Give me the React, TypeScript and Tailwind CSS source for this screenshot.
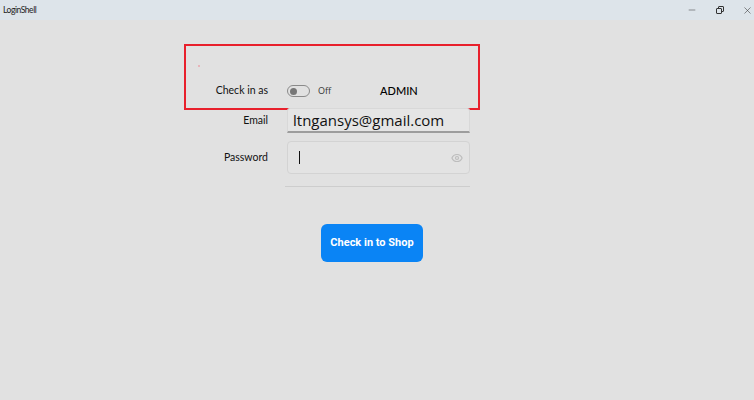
import { Minus, X, Eye } from 'lucide-react';

const TitleBar = () => (
    <div className="h-[20px] flex items-center justify-between bg-[#dde4ea] pl-[3px]">
        <span className="text-[8.5px] text-[#222] tracking-[-0.45px]">LoginShell</span>
        <div className="flex items-center h-full text-[#333]">
            <div className="w-[28px] flex justify-center"><Minus size={10} strokeWidth={1.2} /></div>
            <div className="w-[28px] flex justify-center">
                <div className="relative w-[8px] h-[8px]">
                    <div className="absolute left-[2px] top-0 w-[6px] h-[6px] border border-[#333] rounded-[1px]" />
                    <div className="absolute left-0 top-[2px] w-[6px] h-[6px] border border-[#333] rounded-[1px] bg-[#dde4ea]" />
                </div>
            </div>
            <div className="w-[14px] ml-[6px] flex justify-center"><X size={11} strokeWidth={1.2} /></div>
        </div>
    </div>
);

const App = () => {
    return (
        <div className="w-[754px] h-[400px] bg-[#e1e1e1] flex flex-col overflow-hidden" style={{ fontFamily: 'Lato, "Open Sans", sans-serif' }}>
            <TitleBar />
            <div className="flex flex-col pl-[184px] pt-[24px]">
                <div className="w-[296px] h-[66px] border-2 border-[#e8202c] flex flex-col">
                    <div className="ml-[12px] mt-[19px] w-[2px] h-[2px] rounded-full bg-[#e9a6ad]" />
                    <div className="flex items-center mt-[16px] h-[16px]">
                        <span className="w-[82px] text-right text-[10.5px] text-[#111]">Check in as</span>
                        <div className="ml-[19px] w-[23px] h-[12px] rounded-full border border-[#8a8a8a] flex items-center pl-[2px]">
                            <div className="w-[7px] h-[7px] rounded-full bg-[#777]" />
                        </div>
                        <span className="ml-[8px] text-[9px] text-[#333]" style={{ fontFamily: '"Open Sans", sans-serif' }}>Off</span>
                        <span className="ml-[49px] text-[11px] font-medium text-[#000]">ADMIN</span>
                    </div>
                </div>

                <div className="grid grid-cols-[84px_183px] gap-x-[19px] mt-[-2px]">
                    <div className="h-[25px] flex items-center justify-end text-[10.5px] text-[#111]">Email</div>
                    <div className="h-[25px] bg-[#e5e5e5] border border-[#d8d8d8] border-b-2 border-b-[#9d9d9d] rounded-t-[3px] flex items-center pl-[5px] text-[15px] text-[#111]" style={{ fontFamily: '"Open Sans", sans-serif' }}>
                        ltngansys@gmail.com
                    </div>

                    <div className="h-[33px] mt-[8px] flex items-center justify-end text-[10.5px] text-[#111]">Password</div>
                    <div className="h-[33px] mt-[8px] bg-[#e3e3e3] border border-[#d3d3d3] rounded-[4px] flex items-center justify-between pl-[11px] pr-[6px]">
                        <div className="w-[1px] h-[13px] bg-[#111]" />
                        <Eye size={12} className="text-[#bdbdbd]" strokeWidth={2.4} />
                    </div>

                    <div />
                    <div className="mt-[12px] ml-[-2px] h-[1px] bg-[#cdcdcd]" />
                </div>

                <button className="mt-[37px] ml-[137px] w-[102px] h-[38px] rounded-[6px] bg-[#0a84f5] text-white text-[11px] font-bold" style={{ fontFamily: 'Roboto, "Noto Sans", sans-serif' }}>
                    Check in to Shop
                </button>
            </div>
        </div>
    );
};

export default App;
